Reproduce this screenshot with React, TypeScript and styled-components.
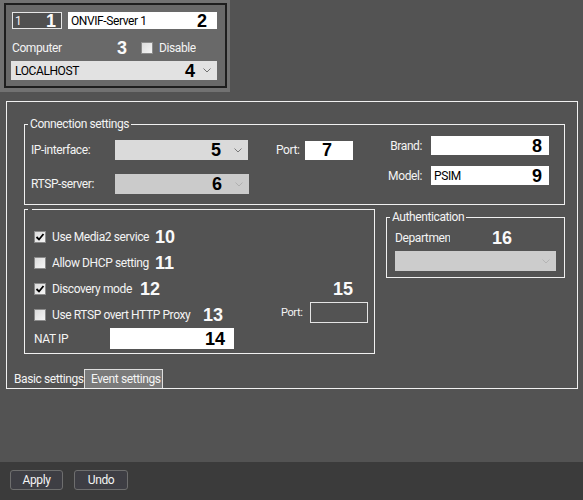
import styled, { createGlobalStyle } from 'styled-components'

const GlobalStyle = createGlobalStyle`
  html, body {
    margin: 0;
    padding: 0;
  }
  body {
    background: #535353;
    font-family: Roboto, "Liberation Sans", Arial, sans-serif;
    font-size: 12px;
    letter-spacing: -0.4px;
    color: #f4f4f4;
  }
`

const Page = styled.div`
  width: 583px;
  height: 500px;
  display: flex;
  flex-direction: column;
  overflow: hidden;
`

/* top object panel */
const TopCrop = styled.div`
  width: 230px;
  height: 92px;
  box-sizing: border-box;
  padding: 3px 0 0 4px;
  background: #727272;
`

const ObjectPanel = styled.div`
  width: 223px;
  height: 85px;
  box-sizing: border-box;
  border: 2px solid #1e1e1e;
  background: #696969;
  padding: 7px 0 0 6px;
  display: flex;
  flex-direction: column;
`

const PanelRow = styled.div<{ $mt?: number; $h: number }>`
  display: flex;
  align-items: center;
  margin-top: ${({ $mt }) => $mt ?? 0}px;
  height: ${({ $h }) => $h}px;
`

const IdField = styled.div`
  width: 50px;
  height: 17px;
  box-sizing: border-box;
  border: 1px solid #e6e6e6;
  background: #505050;
  display: flex;
  align-items: center;
  justify-content: space-between;
  padding: 0 5px 0 2px;
  color: #f4f4f4;
`

const TextField = styled.div<{ $w: number; $h: number; $pr?: number; $center?: boolean }>`
  width: ${({ $w }) => $w}px;
  height: ${({ $h }) => $h}px;
  box-sizing: border-box;
  background: #ffffff;
  color: #000;
  display: flex;
  align-items: center;
  justify-content: ${({ $center }) => ($center ? 'center' : 'space-between')};
  padding: 0 ${({ $pr }) => $pr ?? 7}px 0 3px;
  flex-shrink: 0;
`

const EmptyField = styled.div`
  width: 58px;
  height: 21px;
  box-sizing: border-box;
  border: 1px solid #e4e4e4;
`

const Select = styled.div<{ $w: number; $h: number; $bg: string }>`
  width: ${({ $w }) => $w}px;
  height: ${({ $h }) => $h}px;
  box-sizing: border-box;
  background: ${({ $bg }) => $bg};
  color: #000;
  display: flex;
  align-items: center;
  padding: 0 6px 0 4px;
  flex-shrink: 0;
`

const SelectText = styled.span`
  flex: 1;
`

const Label = styled.span<{ $w?: number; $right?: boolean }>`
  display: inline-block;
  width: ${({ $w }) => ($w ? `${$w}px` : 'auto')};
  text-align: ${({ $right }) => ($right ? 'right' : 'left')};
  white-space: nowrap;
  overflow: hidden;
  flex-shrink: 0;
`

const Num = styled.span<{ $dark?: boolean; $ml?: number; $mr?: number }>`
  font-family: "Liberation Sans", Arial, sans-serif;
  font-weight: bold;
  font-size: 18px;
  letter-spacing: 0;
  line-height: 1;
  color: ${({ $dark }) => ($dark ? '#000' : '#fafafa')};
  margin-left: ${({ $ml }) => ($ml === undefined ? '0' : `${$ml}px`)};
  margin-right: ${({ $mr }) => $mr ?? 0}px;
`

const Box = styled.span`
  width: 12px;
  height: 12px;
  box-sizing: border-box;
  border: 1px solid #8c8c8c;
  background: linear-gradient(135deg, #dcdcdc, #f6f6f6);
  display: inline-flex;
  align-items: center;
  justify-content: center;
  flex-shrink: 0;
`

function Check({ checked }: { checked?: boolean }) {
  return (
    <Box>
      {checked && (
        <svg width="10" height="10" viewBox="0 0 10 10">
          <path d="M1.5 5 L4 7.5 L8.5 2" fill="none" stroke="#000" strokeWidth="1.8" />
        </svg>
      )}
    </Box>
  )
}

function Chevron({ color }: { color: string }) {
  return (
    <svg width="8" height="5" viewBox="0 0 8 5">
      <polyline points="0.5,0.5 4,4 7.5,0.5" fill="none" stroke={color} strokeWidth="1" />
    </svg>
  )
}

/* settings frame */
const Frame = styled.div`
  margin: 9px 0 0 6px;
  width: 572px;
  height: 288px;
  box-sizing: border-box;
  border: 1px solid #f0f0f0;
  padding-top: 15px;
  display: flex;
  flex-direction: column;
`

const FrameBody = styled.div`
  padding: 0 12px 0 17px;
`

const Group = styled.fieldset<{ $w?: number; $mt?: number }>`
  margin: ${({ $mt }) => $mt ?? 0}px 0 0 0;
  padding: 0;
  min-width: 0;
  width: ${({ $w }) => ($w ? `${$w}px` : 'auto')};
  box-sizing: border-box;
  border: 1px solid #f0f0f0;
  flex-shrink: 0;
`

const Legend = styled.legend`
  margin-left: 3px;
  padding: 0 2px;
  line-height: 14px;
  font-size: 12px;
`

const BlankLegend = styled.legend`
  margin-left: 3px;
  padding: 0 2px;
  line-height: 0;
  font-size: 0;
`

const LegendSpacer = styled.span`
  display: block;
  width: 0;
  height: 8px;
`

const ConnBody = styled.div`
  display: flex;
  padding: 5px 15px 10px 6px;
`

const Column = styled.div<{ $gap: number; $mt?: number }>`
  display: flex;
  flex-direction: column;
  gap: ${({ $gap }) => $gap}px;
  margin-top: ${({ $mt }) => $mt ?? 0}px;
`

const RightColumn = styled(Column)`
  margin-left: auto;
`

const FieldRow = styled.div<{ $h: number }>`
  display: flex;
  align-items: center;
  height: ${({ $h }) => $h}px;
`

const Lower = styled.div`
  display: flex;
  gap: 11px;
`

const OptionsBody = styled.div`
  padding: 11px 6px 4px 9px;
  display: flex;
  flex-direction: column;
`

const OptionRow = styled.div`
  display: flex;
  align-items: center;
  height: 26px;
`

const OptionText = styled(Label)`
  margin-left: 6px;
`

const PortGroup = styled.div`
  margin-left: auto;
  align-self: flex-start;
  display: flex;
  align-items: center;
  height: 21px;
`

const SmallLabel = styled(Label)`
  font-size: 11px;
`

const AuthBody = styled.div`
  padding: 4px 7px 6px 8px;
  display: flex;
  flex-direction: column;
`

const TabBar = styled.div`
  margin-top: auto;
  height: 19px;
  padding-left: 7px;
  display: flex;
  align-items: flex-end;
`

const PlainTab = styled.div`
  width: 70px;
  height: 18px;
  line-height: 18px;
  white-space: nowrap;
`

const RaisedTab = styled.div`
  width: 79px;
  height: 19px;
  box-sizing: border-box;
  border: 1px solid #dedede;
  border-bottom: none;
  background: #7a7a7a;
  padding-left: 6px;
  line-height: 18px;
  white-space: nowrap;
`

/* bottom action bar */
const Spacer = styled.div`
  flex: 1;
`

const ActionBar = styled.div`
  height: 38px;
  box-sizing: border-box;
  background: #3b3b3b;
  padding: 8px 0 0 10px;
  display: flex;
  align-items: flex-start;
  gap: 11px;
`

const Button = styled.button<{ $w: number }>`
  width: ${({ $w }) => $w}px;
  height: 20px;
  box-sizing: border-box;
  border: 1px solid #6e6e6e;
  border-radius: 3px;
  background: #3e3e44;
  color: #f4f4f4;
  font-family: inherit;
  font-size: 12px;
  letter-spacing: -0.4px;
  padding: 0;
`

export default function App() {
  return (
    <>
      <GlobalStyle />
      <Page>
        <TopCrop>
          <ObjectPanel>
            <PanelRow $h={17}>
              <IdField>
                <span>1</span>
                <Num>1</Num>
              </IdField>
              <TextField $w={149} $h={17} $pr={10} style={{ marginLeft: 6 }}>
                <span>ONVIF-Server 1</span>
                <Num $dark>2</Num>
              </TextField>
            </PanelRow>
            <PanelRow $mt={11} $h={15}>
              <Label $w={105}>Computer</Label>
              <Num>3</Num>
              <span style={{ marginLeft: 14, display: 'flex' }}>
                <Check />
              </span>
              <OptionText>Disable</OptionText>
            </PanelRow>
            <PanelRow $mt={6} $h={19}>
              <Select $w={206} $h={19} $bg="#e2e2e2" style={{ marginLeft: -1 }}>
                <SelectText>LOCALHOST</SelectText>
                <Num $dark $mr={8}>4</Num>
                <Chevron color="#707070" />
              </Select>
            </PanelRow>
          </ObjectPanel>
        </TopCrop>

        <Frame>
          <FrameBody>
            <Group>
              <Legend>Connection settings</Legend>
              <ConnBody>
                <Column $gap={14} $mt={4}>
                  <FieldRow $h={20}>
                    <Label $w={84}>IP-interface:</Label>
                    <Select $w={133} $h={20} $bg="#dadada">
                      <SelectText />
                      <Num $dark $mr={13}>5</Num>
                      <Chevron color="#7a7a7a" />
                    </Select>
                    <Label $w={29} style={{ marginLeft: 28 }}>Port:</Label>
                    <TextField $w={48} $h={19} $center>
                      <Num $dark>7</Num>
                    </TextField>
                  </FieldRow>
                  <FieldRow $h={20}>
                    <Label $w={84}>RTSP-server:</Label>
                    <Select $w={134} $h={20} $bg="#cbcbcb">
                      <SelectText />
                      <Num $dark $mr={13}>6</Num>
                      <Chevron color="#b0b0b0" />
                    </Select>
                  </FieldRow>
                </Column>
                <RightColumn $gap={11}>
                  <FieldRow $h={19}>
                    <Label $w={46} $right style={{ paddingRight: 9, boxSizing: 'border-box' }}>
                      Brand:
                    </Label>
                    <TextField $w={118} $h={19}>
                      <span />
                      <Num $dark>8</Num>
                    </TextField>
                  </FieldRow>
                  <FieldRow $h={19}>
                    <Label $w={46} $right style={{ paddingRight: 9, boxSizing: 'border-box' }}>
                      Model:
                    </Label>
                    <TextField $w={118} $h={19}>
                      <span>PSIM</span>
                      <Num $dark>9</Num>
                    </TextField>
                  </FieldRow>
                </RightColumn>
              </ConnBody>
            </Group>

            <Lower>
              <Group $w={351}>
                <BlankLegend>
                  <LegendSpacer />
                </BlankLegend>
                <OptionsBody>
                  <OptionRow>
                    <Check checked />
                    <OptionText $w={103}>Use Media2 service</OptionText>
                    <Num>10</Num>
                  </OptionRow>
                  <OptionRow>
                    <Check />
                    <OptionText $w={103}>Allow DHCP setting</OptionText>
                    <Num>11</Num>
                  </OptionRow>
                  <OptionRow>
                    <Check checked />
                    <OptionText $w={88}>Discovery mode</OptionText>
                    <Num>12</Num>
                    <Num $ml={0} $mr={15} style={{ marginLeft: 'auto' }}>
                      15
                    </Num>
                  </OptionRow>
                  <OptionRow>
                    <Check />
                    <OptionText $w={151}>Use RTSP overt HTTP Proxy</OptionText>
                    <Num>13</Num>
                    <PortGroup>
                      <SmallLabel $w={29}>Port:</SmallLabel>
                      <EmptyField />
                    </PortGroup>
                  </OptionRow>
                  <FieldRow $h={21}>
                    <Label $w={76}>NAT IP</Label>
                    <TextField $w={124} $h={21} $pr={9}>
                      <span />
                      <Num $dark>14</Num>
                    </TextField>
                  </FieldRow>
                </OptionsBody>
              </Group>

              <Group $w={179} $mt={5} style={{ alignSelf: 'flex-start' }}>
                <Legend>Authentication</Legend>
                <AuthBody>
                  <FieldRow $h={20}>
                    <Label $w={55}>Department</Label>
                    <Num $ml={42}>16</Num>
                  </FieldRow>
                  <Select $w={161} $h={20} $bg="#cccccc" style={{ marginTop: 3 }}>
                    <SelectText />
                    <Chevron color="#b4b4b4" />
                  </Select>
                </AuthBody>
              </Group>
            </Lower>
          </FrameBody>

          <TabBar>
            <PlainTab>Basic settings</PlainTab>
            <RaisedTab>Event settings</RaisedTab>
          </TabBar>
        </Frame>

        <Spacer />
        <ActionBar>
          <Button $w={53}>Apply</Button>
          <Button $w={54}>Undo</Button>
        </ActionBar>
      </Page>
    </>
  )
}
